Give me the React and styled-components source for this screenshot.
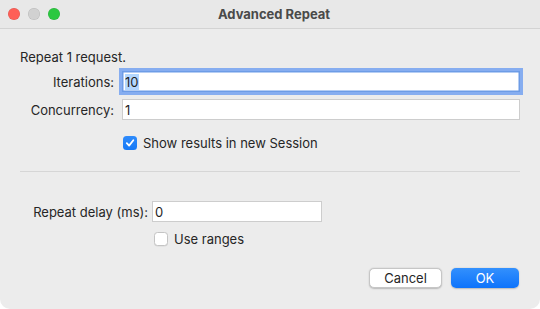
import React, { useState } from "react";
import styled, { createGlobalStyle } from "styled-components";

const GlobalStyle = createGlobalStyle`
  html, body {
    margin: 0;
    padding: 0;
    background: #ffffff;
  }
  body {
    font-family: Inter, "Liberation Sans", Arial, sans-serif;
    font-size: 13px;
    color: #262626;
  }
  * {
    box-sizing: border-box;
  }
`;

const Window = styled.div`
  width: 540px;
  height: 309px;
  background: #ececec;
  border-radius: 0 0 10px 10px;
  overflow: hidden;
  display: flex;
  flex-direction: column;
`;

const TitleBar = styled.div`
  height: 29px;
  flex-shrink: 0;
  display: grid;
  grid-template-columns: 1fr auto 1fr;
  align-items: center;
  background: #e8e8e8;
  border-bottom: 1px solid #d3d3d3;
  padding: 0 0 1px 8px;
`;

const Lights = styled.div`
  display: flex;
  gap: 8px;
`;

const Light = styled.span`
  width: 12px;
  height: 12px;
  border-radius: 50%;
  background: ${(p) => p.$color};
  box-shadow: inset 0 0 0 0.5px rgba(0, 0, 0, 0.12);
`;

const Title = styled.div`
  font-weight: 700;
  font-size: 13px;
  color: #4a4a4a;
`;

const Body = styled.div`
  padding: 0 20px;
  display: flex;
  flex-direction: column;
`;

const Intro = styled.div`
  margin-top: 20px;
  line-height: 16px;
`;

const FormGrid = styled.div`
  display: grid;
  grid-template-columns: ${(p) => p.$labelWidth}px ${(p) => p.$fieldWidth};
  column-gap: ${(p) => p.$gap}px;
  row-gap: 7px;
  align-items: center;
  margin-top: ${(p) => p.$top}px;
`;

const Label = styled.label`
  justify-self: end;
  white-space: nowrap;
  line-height: 16px;
`;

const Field = styled.input`
  height: 21px;
  width: 100%;
  border: 1px solid #cdcdcd;
  border-bottom-color: #bdbdbd;
  background: #fff;
  font-family: inherit;
  font-size: 13px;
  color: #1f1f1f;
  padding: 0 0 0 2px;
  outline: none;
  box-shadow: ${(p) =>
    p.$focused ? "0 0 0 3px #86adf0, inset 0 0 0 0.5px #6c9be8" : "none"};
  border-color: ${(p) => (p.$focused ? "#6d9ce6" : "#cdcdcd")};

  &::selection {
    background: #b3d7ff;
    color: #1f1f1f;
  }
`;

const CheckRow = styled.label`
  display: flex;
  align-items: center;
  gap: 6px;
  height: 16px;
  margin-top: ${(p) => p.$top}px;
  margin-left: ${(p) => p.$left}px;
  line-height: 16px;
`;

const Box = styled.span`
  width: 14px;
  height: 14px;
  border-radius: 3.5px;
  display: flex;
  align-items: center;
  justify-content: center;
  background: ${(p) => (p.$checked ? "linear-gradient(#2f8bfb, #1579f6)" : "#fff")};
  border: ${(p) => (p.$checked ? "none" : "1px solid #c4c4c4")};
  box-shadow: ${(p) => (p.$checked ? "none" : "0 0.5px 0.5px rgba(0,0,0,0.08)")};
`;

const Separator = styled.div`
  height: 1px;
  background: #d6d6d6;
  margin-top: 20px;
`;

const Buttons = styled.div`
  display: flex;
  justify-content: flex-end;
  gap: 9px;
  margin-top: 21px;
  padding-right: 1px;
`;

const Button = styled.button`
  height: 20px;
  width: ${(p) => p.$width}px;
  border-radius: 5px;
  font-family: inherit;
  font-size: 13px;
  padding: 0;
  border: ${(p) => (p.$primary ? "none" : "0.5px solid #c6c6c6")};
  background: ${(p) => (p.$primary ? "linear-gradient(#3390fd, #0d73fb)" : "#fff")};
  color: ${(p) => (p.$primary ? "#fff" : "#262626")};
  box-shadow: 0 0.5px 1.5px rgba(0, 0, 0, 0.22);
`;

const Check = () => (
  <svg width="10" height="10" viewBox="0 0 10 10">
    <path
      d="M1.8 5.2 L4.1 7.6 L8.3 2.3"
      fill="none"
      stroke="#fff"
      strokeWidth="1.8"
      strokeLinecap="round"
      strokeLinejoin="round"
    />
  </svg>
);

const Checkbox = ({ checked, label, top, left }) => (
  <CheckRow $top={top} $left={left}>
    <Box $checked={checked}>{checked && <Check />}</Box>
    {label}
  </CheckRow>
);

export default function App() {
  const [iterations, setIterations] = useState("10");
  const [concurrency, setConcurrency] = useState("1");
  const [delay, setDelay] = useState("0");

  return (
    <>
      <GlobalStyle />
      <Window>
        <TitleBar>
          <Lights>
            <Light $color="#fe5f57" />
            <Light $color="#d1d1d1" />
            <Light $color="#2bc840" />
          </Lights>
          <Title>Advanced Repeat</Title>
          <span />
        </TitleBar>
        <Body>
          <Intro>Repeat 1 request.</Intro>
          <FormGrid $labelWidth={94} $fieldWidth="1fr" $gap={8} $top={6}>
            <Label>Iterations:</Label>
            <Field
              $focused
              value={iterations}
              onChange={(e) => setIterations(e.target.value)}
              ref={(el) => el && el.select()}
            />
            <Label>Concurrency:</Label>
            <Field
              value={concurrency}
              onChange={(e) => setConcurrency(e.target.value)}
            />
          </FormGrid>
          <Checkbox checked label="Show results in new Session" top={15} left={103} />
          <Separator />
          <FormGrid $labelWidth={128} $fieldWidth="170px" $gap={4} $top={29}>
            <Label>Repeat delay (ms):</Label>
            <Field value={delay} onChange={(e) => setDelay(e.target.value)} />
          </FormGrid>
          <Checkbox label="Use ranges" top={9} left={134} />
          <Buttons>
            <Button $width={73}>Cancel</Button>
            <Button $primary $width={68}>OK</Button>
          </Buttons>
        </Body>
      </Window>
    </>
  );
}
